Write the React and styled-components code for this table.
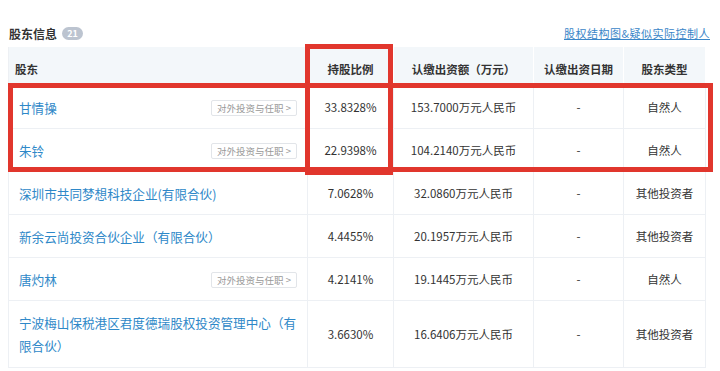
import React from "react";
import styled, { createGlobalStyle } from "styled-components";

const Global = createGlobalStyle`
  html, body { margin: 0; padding: 0; background: #fff; }
  body { font-family: "Noto Sans CJK SC", "Noto Sans", sans-serif; color: #333; }
`;

const Page = styled.div`
  width: 720px;
  height: 371px;
  overflow: hidden;
  padding: 24px 0 0 8px;
  box-sizing: border-box;
`;

const TitleRow = styled.div`
  display: flex;
  align-items: center;
  justify-content: space-between;
  width: 702px;
  height: 18px;
  margin-bottom: 5px;
`;

const Title = styled.div`
  display: flex;
  align-items: center;
  gap: 5px;
  font-size: 12px;
  font-weight: 700;
  color: #333;
  padding-left: 1px;
`;

const Badge = styled.span`
  display: inline-flex;
  align-items: center;
  justify-content: center;
  height: 13px;
  min-width: 21px;
  padding: 0 2px;
  box-sizing: border-box;
  border-radius: 7px;
  background: #bcc4d0;
  color: #fff;
  font-size: 9px;
  font-weight: 700;
`;

const TopLink = styled.a`
  font-size: 11px;
  letter-spacing: 0.5px;
  color: #3a86c8;
  text-decoration: underline;
`;

const TableWrap = styled.div`
  position: relative;
  width: 697px;
`;

const Grid = styled.div`
  display: grid;
  grid-template-columns: 299px 86px 140px 90px 82px;
  border-left: 1px solid #edf0f4;
`;

const HeadCell = styled.div`
  height: 39px;
  box-sizing: border-box;
  background: #f3f7fa;
  display: flex;
  align-items: center;
  justify-content: ${(p) => (p.$left ? "flex-start" : "center")};
  padding: 5px ${(p) => (p.$left ? "6px" : "0")} 0;
  font-size: 11.5px;
  font-weight: 700;
  color: #333;
  border-right: 1px solid #fff;
`;

const Cell = styled.div`
  min-height: 43px;
  box-sizing: border-box;
  border-bottom: 1px solid #edf0f4;
  border-right: 1px solid #edf0f4;
  display: flex;
  align-items: center;
  justify-content: center;
  font-size: 11.5px;
  color: #333;
  background: #fff;
`;

const NameCell = styled(Cell)`
  justify-content: space-between;
  padding: ${(p) => (p.$tall ? "10px" : "0")} 10px;
  gap: 6px;
`;

const Name = styled.span`
  font-size: 12.6px;
  line-height: 23px;
  color: #2e88c8;
`;

const InvestBtn = styled.span`
  flex: none;
  display: inline-flex;
  align-items: center;
  height: 16px;
  padding: 0 5px;
  box-sizing: border-box;
  border: 1px solid #e2e5e9;
  border-radius: 2px;
  font-size: 9.5px;
  color: #999;
  background: #fff;
  margin-top: 1px;
`;

const RedBox = styled.div`
  position: absolute;
  border: 5px solid #e1362d;
  box-sizing: border-box;
  pointer-events: none;
`;

const rows = [
  { name: "甘情操", btn: true, pct: "33.8328%", amt: "153.7000万元人民币", type: "自然人" },
  { name: "朱铃", btn: true, pct: "22.9398%", amt: "104.2140万元人民币", type: "自然人" },
  { name: "深圳市共同梦想科技企业(有限合伙)", pct: "7.0628%", amt: "32.0860万元人民币", type: "其他投资者" },
  { name: "新余云尚投资合伙企业（有限合伙）", pct: "4.4455%", amt: "20.1957万元人民币", type: "其他投资者" },
  { name: "唐灼林", btn: true, pct: "4.2141%", amt: "19.1445万元人民币", type: "自然人" },
  { name: "宁波梅山保税港区君度德瑞股权投资管理中心（有限合伙）", tall: true, pct: "3.6630%", amt: "16.6406万元人民币", type: "其他投资者" },
];

export default function App() {
  return (
    <>
      <Global />
      <Page>
        <TitleRow>
          <Title>
            股东信息 <Badge>21</Badge>
          </Title>
          <TopLink>股权结构图&amp;疑似实际控制人</TopLink>
        </TitleRow>
        <TableWrap>
          <Grid>
            <HeadCell $left>股东</HeadCell>
            <HeadCell>持股比例</HeadCell>
            <HeadCell>认缴出资额（万元）</HeadCell>
            <HeadCell>认缴出资日期</HeadCell>
            <HeadCell>股东类型</HeadCell>
            {rows.map((r) => (
              <React.Fragment key={r.name}>
                <NameCell $tall={r.tall}>
                  <Name>{r.name}</Name>
                  {r.btn && <InvestBtn>对外投资与任职 &gt;</InvestBtn>}
                </NameCell>
                <Cell>{r.pct}</Cell>
                <Cell>{r.amt}</Cell>
                <Cell>-</Cell>
                <Cell>{r.type}</Cell>
              </React.Fragment>
            ))}
          </Grid>
          <RedBox style={{ left: 297, top: -3, width: 88, height: 131 }} />
          <RedBox style={{ left: 0, top: 36, width: 705, height: 89 }} />
        </TableWrap>
      </Page>
    </>
  );
}
